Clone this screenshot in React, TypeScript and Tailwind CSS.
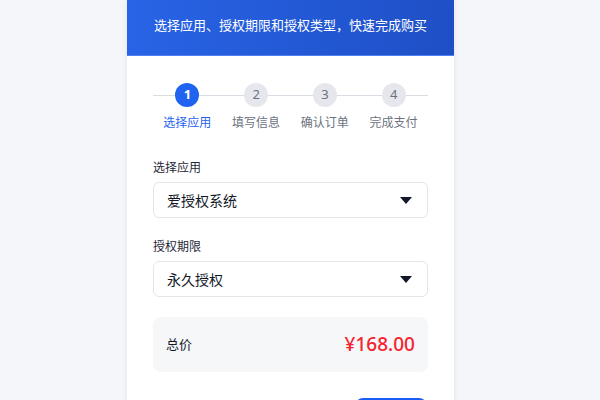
import { useState } from "react";

const steps = ["选择应用", "填写信息", "确认订单", "完成支付"];

function Caret() {
  return (
    <svg width="12" height="7" viewBox="0 0 12 7" className="shrink-0">
      <path d="M0 0 L12 0 L6 7 Z" fill="#111827" />
    </svg>
  );
}

function SelectBox({ label, value, className = "" }: { label: string; value: string; className?: string }) {
  return (
    <div className={className}>
      <div className="text-[12px] leading-[17px] text-[#1f2937]">{label}</div>
      <div className="mt-[6px] h-[36px] rounded-[6px] border border-[#e3e5ea] bg-white flex items-center justify-between pl-[13px] pr-[15px]">
        <span className="text-[14px] text-[#111827]">{value}</span>
        <Caret />
      </div>
    </div>
  );
}

export default function App() {
  const [current] = useState(0);

  return (
    <div
      className="min-h-[400px] h-[400px] overflow-hidden bg-[#f4f6fa]"
      style={{ fontFamily: '"Noto Sans", "Noto Sans CJK SC", sans-serif' }}
    >
      <div className="ml-[127px] w-[327px] h-[600px] bg-white shadow-[0_0_6px_rgba(15,23,42,0.08)]">
        <div className="h-[56px] bg-gradient-to-r from-[#2864e6] to-[#1f4fc6] border-b border-[#4f7ff0] pt-[12px] text-center">
          <span className="text-[13px] leading-[18px] text-white">选择应用、授权期限和授权类型，快速完成购买</span>
        </div>

        <div className="px-[26px] pt-[27px]">
          <div className="relative">
            <div className="absolute left-0 right-0 top-[12px] h-px bg-[#d9dce3]" />
            <div className="relative grid grid-cols-4">
              {steps.map((s, i) => (
                <div key={s} className="flex flex-col items-center">
                  <div
                    className={
                      i === current
                        ? "w-[24px] h-[24px] rounded-full bg-[#1f63f0] text-white text-[13px] font-bold flex items-center justify-center"
                        : "w-[24px] h-[24px] rounded-full bg-[#e5e7ec] text-[#6b7280] text-[13px] flex items-center justify-center"
                    }
                  >
                    {i + 1}
                  </div>
                  <div
                    className={
                      i === current
                        ? "mt-[7px] text-[12px] leading-[17px] text-[#1f63f0]"
                        : "mt-[7px] text-[12px] leading-[17px] text-[#6b7280]"
                    }
                  >
                    {s}
                  </div>
                </div>
              ))}
            </div>
          </div>

          <SelectBox label="选择应用" value="爱授权系统" className="mt-[28px]" />
          <SelectBox label="授权期限" value="永久授权" className="mt-[20px]" />

          <div className="mt-[20px] h-[55px] rounded-[8px] bg-[#f6f7f9] flex items-center justify-between pl-[13px] pr-[13px]">
            <span className="text-[13px] text-[#111827]">总价</span>
            <span className="text-[19px] font-medium text-[#f5222d]">¥168.00</span>
          </div>

          <div className="mt-[26px] flex justify-end pr-px">
            <button className="w-[72px] h-[36px] rounded-[8px] bg-[#1a5cf5] text-white text-[13px]">下一步</button>
          </div>
        </div>
      </div>
    </div>
  );
}
